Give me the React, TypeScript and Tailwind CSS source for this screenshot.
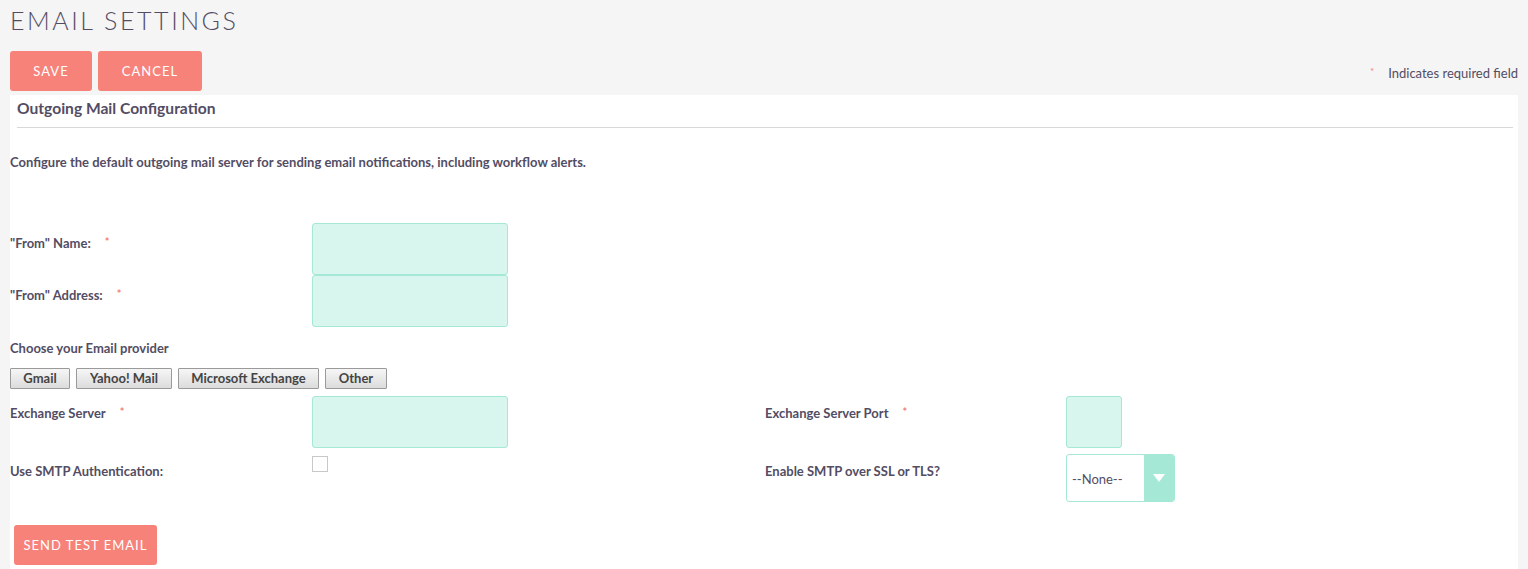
import React from "react";

const inputCls = "h-[52px] rounded-[3px] border border-[#a5e8d6] bg-[#d8f5ee]";

function Req() {
  return <span className="ml-[14px] text-[11px] text-[#f08377] align-top">*</span>;
}

export default function App() {
  return (
    <div className="min-h-[569px] bg-[#f5f5f5] text-[#534d64]" style={{ fontFamily: "Lato, 'Open Sans', sans-serif" }}>
      <div className="px-[10px]">
        <h1 className="pt-[5px] text-[25px] font-light leading-[30px] tracking-[2.55px] text-[#534d64]">EMAIL SETTINGS</h1>
        <div className="mt-[16px] flex items-end justify-between">
          <div className="flex gap-[6px]">
            <button className="h-[40px] w-[82px] rounded-[3px] bg-[#f7827a] pt-[1px] text-[13px] tracking-[1px] text-white">SAVE</button>
            <button className="h-[40px] w-[104px] rounded-[3px] bg-[#f7827a] pt-[1px] text-[13px] tracking-[1px] text-white">CANCEL</button>
          </div>
          <div className="mb-[8px] text-[13px]">
            <span className="mr-[14px] text-[10px] text-[#f08377] align-top">*</span>Indicates required field
          </div>
        </div>
        <div className="mt-[4px] min-h-[474px] bg-white">
          <div className="ml-[7px] mr-[5px] border-b border-[#d8d8d8] pb-[9px] pt-[3px]">
            <h2 className="text-[15.6px] font-bold leading-[20px]">Outgoing Mail Configuration</h2>
          </div>
          <p className="mt-[26px] text-[13px] font-bold leading-[16px]">
            Configure the default outgoing mail server for sending email notifications, including workflow alerts.
          </p>
          <div className="mt-[53px] grid grid-cols-[302px_453px_301px_1fr] text-[13px] font-bold">
            <div className="pt-[11px]">"From" Name:<Req /></div>
            <div><div className={`${inputCls} w-[196px]`} /></div>
            <div />
            <div />
            <div className="pt-[11px]">"From" Address:<Req /></div>
            <div><div className={`${inputCls} w-[196px]`} /></div>
            <div />
            <div />
          </div>
          <div className="mt-[13px] text-[13px] font-bold leading-[16px]">Choose your Email provider</div>
          <div className="mt-[12px] flex gap-[6px] text-[13px] font-bold">
            {[
              ["Gmail", "w-[60px]"],
              ["Yahoo! Mail", "w-[96px]"],
              ["Microsoft Exchange", "w-[141px]"],
              ["Other", "w-[62px]"],
            ].map(([t, w]) => (
              <button key={t} className={`h-[21px] ${w} rounded-[1px] border border-[#9a9a9a] bg-gradient-to-b from-[#f6f6f6] to-[#dcdcdc] leading-[19px] text-[#444]`}>
                {t}
              </button>
            ))}
          </div>
          <div className="mt-[7px] grid grid-cols-[302px_453px_301px_1fr] text-[13px] font-bold">
            <div className="pt-[8px]">Exchange Server<Req /></div>
            <div><div className={`${inputCls} w-[196px]`} /></div>
            <div className="pt-[8px]">Exchange Server Port<Req /></div>
            <div><div className={`${inputCls} w-[56px]`} /></div>
            <div className="pt-[14px]">Use SMTP Authentication:</div>
            <div className="pt-[8px]">
              <div className="h-[16px] w-[16px] border border-[#c8c8c8] bg-white" />
            </div>
            <div className="pt-[14px]">Enable SMTP over SSL or TLS?</div>
            <div className="pt-[6px]">
              <div className="flex h-[48px] w-[109px] overflow-hidden rounded-[3px] border border-[#a5e8d6] bg-white">
                <div className="flex flex-1 items-center pl-[5px] pt-[4px] text-[13px] font-normal text-[#534d64]">--None--</div>
                <div className="flex w-[30px] items-center justify-center bg-[#a5e8d6]">
                  <svg width="12" height="8" viewBox="0 0 12 8"><path d="M0 0 L12 0 L6 8 Z" fill="#fff" /></svg>
                </div>
              </div>
            </div>
          </div>
          <div className="mt-[23px] px-[4px]">
            <button className="h-[40px] w-[143px] rounded-[3px] bg-[#f7827a] pt-[1px] text-[13px] tracking-[1px] text-white">SEND TEST EMAIL</button>
          </div>
        </div>
      </div>
    </div>
  );
}
